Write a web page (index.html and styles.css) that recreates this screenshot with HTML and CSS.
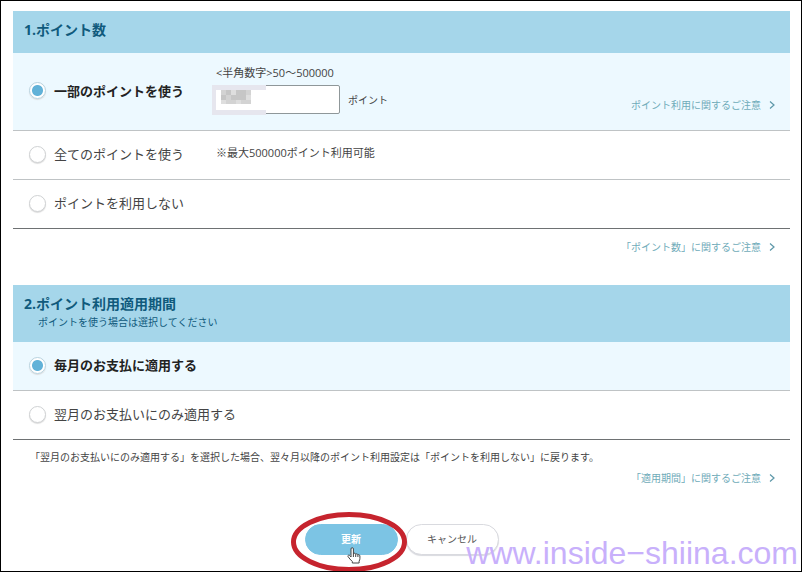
FILE: index.html
```html
<!DOCTYPE html>
<html lang="ja">
<head>
<meta charset="utf-8">
<meta name="viewport" content="width=device-width, initial-scale=1">
<title>ポイント利用設定</title>
<link rel="stylesheet" href="styles.css">
</head>
<body>
<form class="page">
  <section class="section">
    <header class="head"><h2 id="amount">1.ポイント数</h2></header>
    <div role="radiogroup" aria-labelledby="amount">
      <div class="row row-tall selected">
        <label class="choice"><input type="radio" name="amount" checked><span>一部のポイントを使う</span></label>
        <div class="detail">
          <label for="points">&lt;半角数字&gt;50〜500000</label>
          <div class="entry">
            <div class="field">
              <input id="points" type="text" inputmode="numeric">
              <svg class="mask" width="54" height="30" viewBox="0 0 54 30" aria-hidden="true">
                <path fill="#e6e6ee" d="M0 0h54v5H4v20h50v5H0z"/>
                <path fill="#fff" d="M4 5h50v20H4z"/>
                <path fill="#d3d3d3" d="M9 5h30v14H9z"/>
                <path fill="#c6c6c6" d="M14 5h5v5h-5zM24 5h10v5H24zM9 10h5v5H9zM19 10h10v5H19zM29 10h5v5h-5z"/>
                <path fill="#dedede" d="M19 5h5v5h-5zM34 10h5v5h-5zM9 15h5v4H9zM24 15h5v4h-5z"/>
              </svg>
            </div>
            <span>ポイント</span>
          </div>
        </div>
        <a class="more" href="#">ポイント利用に関するご注意<svg width="6" height="8" viewBox="0 0 6 8" aria-hidden="true"><path d="M1 .5 5 4 1 7.500"/></svg></a>
      </div>
      <div class="row">
        <label class="choice"><input type="radio" name="amount"><span>全てのポイントを使う</span></label>
        <div class="detail">※最大500000ポイント利用可能</div>
      </div>
      <div class="row">
        <label class="choice"><input type="radio" name="amount"><span>ポイントを利用しない</span></label>
      </div>
    </div>
    <div class="foot"><a class="more" href="#">「ポイント数」に関するご注意<svg width="6" height="8" viewBox="0 0 6 8" aria-hidden="true"><path d="M1 .5 5 4 1 7.500"/></svg></a></div>
  </section>

  <section class="section">
    <header class="head head-tall">
      <h2 id="period">2.ポイント利用適用期間</h2>
      <p>ポイントを使う場合は選択してください</p>
    </header>
    <div role="radiogroup" aria-labelledby="period">
      <div class="row selected">
        <label class="choice"><input type="radio" name="period" checked><span>毎月のお支払に適用する</span></label>
      </div>
      <div class="row">
        <label class="choice"><input type="radio" name="period"><span>翌月のお支払いにのみ適用する</span></label>
      </div>
    </div>
    <p class="note">「翌月のお支払いにのみ適用する」を選択した場合、翌々月以降のポイント利用設定は「ポイントを利用しない」に戻ります。</p>
    <a class="more" href="#">「適用期間」に関するご注意<svg width="6" height="8" viewBox="0 0 6 8" aria-hidden="true"><path d="M1 .5 5 4 1 7.500"/></svg></a>
  </section>

  <div class="actions">
    <div class="primary">
      <button class="btn update" type="submit">更新</button>
      <svg class="ring" width="116" height="60" viewBox="0 0 116 60" aria-hidden="true"><ellipse cx="58" cy="30" rx="55.500" ry="27.500"/></svg>
      <svg class="hand" width="14" height="17" viewBox="0 0 14 17" aria-hidden="true"><path d="M4 10V2q0-1.300 1.200-1.300T6.400 2v5q.3-.9 1.200-.8T8.700 7.300q.4-.6 1.200-.4t1 .9q.5-.4 1.200-.1t.8 1.300v2.500q0 1.500-.8 2.700V16H5.300v-1.500Q2.600 12 1 9.500q-.4-1 .5-1.300T3 8.700zM6.400 7v3M8.700 7.300V10M10.900 7.800V10"/></svg>
    </div>
    <button class="btn cancel" type="button">キャンセル</button>
  </div>
</form>
<div class="watermark">www.inside−shiina.com</div>
</body>
</html>
```
FILE: styles.css
```css
* { box-sizing: border-box; }

body {
  position: relative;
  min-height: 100vh;
  margin: 0;
  padding: 10px 11px 0 12px;
  overflow: hidden;
  border: 1px solid #000;
  background: #fff;
  color: #444;
  font: 10px/16px "Open Sans", "Noto Sans CJK JP", sans-serif;
}

h2, p { margin: 0; }

.section {
  display: flex;
  flex-direction: column;
}

.head {
  display: flex;
  flex-direction: column;
  justify-content: center;
  min-height: 42px;
  padding: 0 11px 4px;
  background: #a5d6ea;
  color: #105a7c;
}

.head-tall { min-height: 57px; }

.head h2 {
  font-size: 14px;
  line-height: 20px;
  font-weight: 700;
}

.head p { padding-left: 14px; }

.row {
  display: grid;
  grid-template-columns: 187px 1fr auto;
  align-items: center;
  min-height: 49px;
  padding: 0 0 2px 16px;
  border-bottom: 1px solid #bfc3c5;
}

.row:last-child { border-bottom-color: #6e7173; }
.row-tall { min-height: 78px; }
.selected { background: #edf9ff; }

.choice {
  display: flex;
  align-items: center;
  gap: 8px;
  font-size: 13px;
  line-height: 20px;
  white-space: nowrap;
}

.selected .choice {
  color: #222;
  font-weight: 700;
}

.choice input {
  appearance: none;
  flex: none;
  width: 17px;
  height: 17px;
  margin: 0;
  border: 1px solid #d0d2d4;
  border-radius: 50%;
  background: #fff;
  box-shadow: 0 1px 1px #dcdcdc;
}

.choice input:checked {
  border-color: #b9d3df;
  background: radial-gradient(circle, #62b2d8 5px, #fff 6px);
}

.detail {
  padding-bottom: 2px;
  font-size: 11px;
  white-space: nowrap;
}

.entry {
  display: flex;
  align-items: center;
  gap: 8px;
  margin-top: 4px;
  font-size: 10px;
}

.field {
  position: relative;
  display: flex;
}

.field input {
  width: 124px;
  height: 29px;
  padding: 0 6px;
  border: 1px solid #8f9799;
  border-radius: 2px;
  background: #fff;
  font: inherit;
}

.mask {
  position: absolute;
  top: 0;
  left: -4px;
}

.more {
  display: flex;
  align-items: center;
  align-self: flex-end;
  gap: 8px;
  padding-right: 15px;
  color: #6fabb9;
  text-decoration: none;
}

.row .more { padding-bottom: 15px; }

.more path {
  fill: none;
  stroke: #5c97a8;
  stroke-width: 1.2;
}

.foot {
  display: flex;
  justify-content: flex-end;
  height: 56px;
  padding-top: 10px;
}

.foot .more { align-self: flex-start; }

.note {
  padding: 9px 0 5px 17px;
}

.actions {
  display: flex;
  justify-content: center;
  gap: 8px;
  padding-top: 38px;
}

.primary { position: relative; }

.btn {
  display: block;
  width: 93px;
  height: 31px;
  padding: 0 0 2px;
  border: 1px solid #d9dadf;
  border-radius: 16px;
  background: #fff;
  color: #555;
  font: 10px/16px "Open Sans", "Noto Sans CJK JP", sans-serif;
  box-shadow: 0 1px 1px #d9dadf;
}

.update {
  border-color: #7cc4e4;
  background: #7cc4e4;
  color: #fff;
  font-weight: 700;
  box-shadow: none;
}

.ring {
  position: absolute;
  top: -12px;
  left: -14px;
}

.ring ellipse {
  fill: none;
  stroke: #c6242e;
  stroke-width: 5;
}

.hand {
  position: absolute;
  top: 23px;
  left: 42px;
}

.hand path {
  fill: #fff;
  stroke: #444;
  stroke-width: 1;
}

.watermark {
  position: absolute;
  right: 3px;
  bottom: 0;
  color: #c8b0fb;
  font: 32px/36px "Liberation Sans", sans-serif;
  white-space: nowrap;
}
```
